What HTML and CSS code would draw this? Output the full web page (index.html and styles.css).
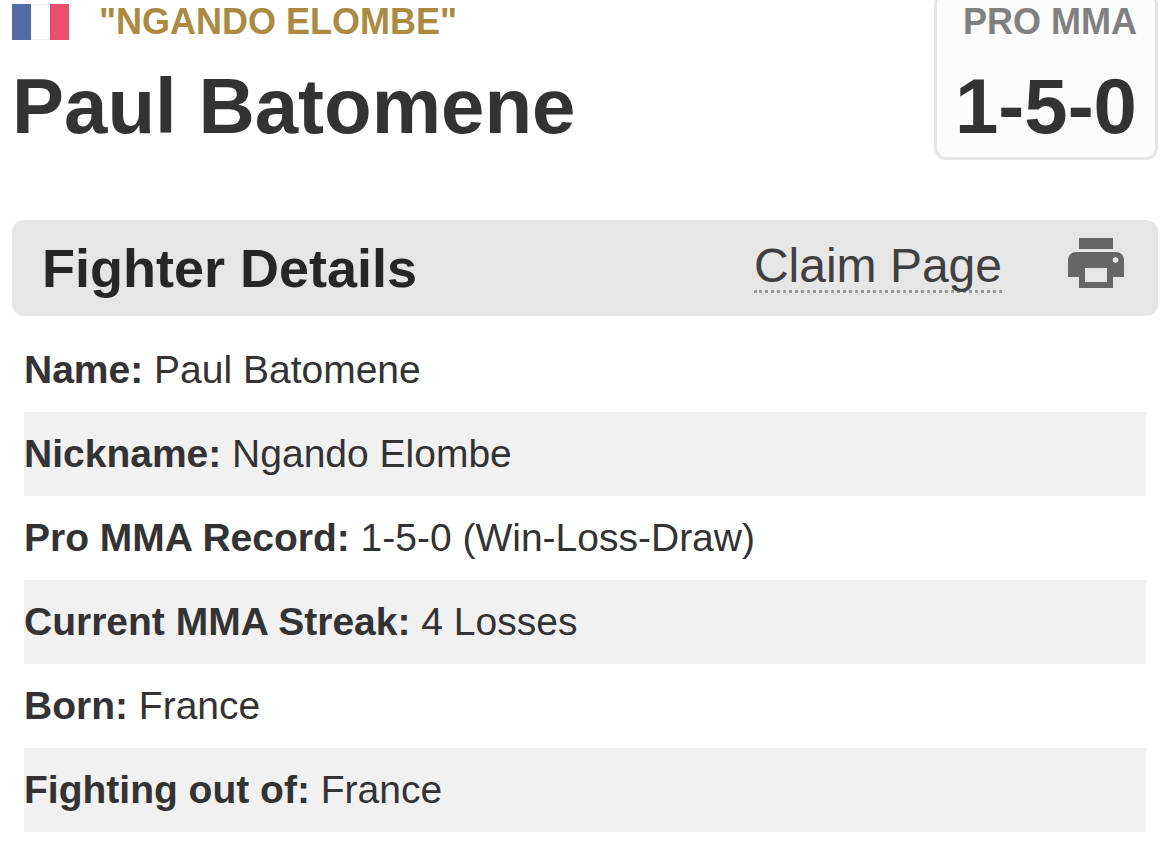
FILE: index.html
```
<!DOCTYPE html>
<html lang="en">

<head>
    <meta charset="UTF-8">
    <meta name="viewport" content="width=device-width, initial-scale=1.0">
    <title>Paul Batomene</title>
    <link rel="stylesheet" href="styles.css">
</head>

<body>
    <header class="fighter">
        <div class="title">
            <div class="nick">
                <svg class="flag" viewBox="0 0 57 36" role="img" aria-label="France">
                    <rect width="57" height="36" fill="#f0f0f0"/>
                    <rect x="19" y="1" width="19" height="34" fill="#fff"/>
                    <rect width="19" height="36" fill="#4f6da3"/>
                    <rect x="38" width="19" height="36" fill="#ea4f6b"/>
                </svg>
                <h4>"NGANDO ELOMBE"</h4>
            </div>
            <h1>Paul Batomene</h1>
        </div>
        <div class="record">
            <h5>PRO MMA</h5>
            <h3>1-5-0</h3>
        </div>
    </header>

    <section class="details">
        <div class="bar">
            <h2>Fighter Details</h2>
            <a class="claim" href="#">Claim Page</a>
            <button class="print" type="button" aria-label="Print">
                <svg viewBox="0 0 56 50">
                    <path fill="#666" fill-rule="evenodd" d="M11 0h34v11H11zM8 14h40a8 8 0 0 1 8 8v17H45v11H11V39H0V22a8 8 0 0 1 8-8zM17 30v14h22V30zM47.500 19.200a2.800 2.800 0 1 0 0 5.600a2.800 2.800 0 1 0 0-5.600z"/>
                </svg>
            </button>
        </div>
        <ul>
            <li><strong>Name:</strong> <span>Paul Batomene</span></li>
            <li><strong>Nickname:</strong> <span>Ngando Elombe</span></li>
            <li><strong>Pro MMA Record:</strong> <span>1-5-0 (Win-Loss-Draw)</span></li>
            <li><strong>Current MMA Streak:</strong> <span>4 Losses</span></li>
            <li><strong>Born:</strong> <span>France</span></li>
            <li><strong>Fighting out of:</strong> <span>France</span></li>
        </ul>
    </section>
</body>

</html>
```
FILE: styles.css
```
* {
    margin: 0;
    padding: 0;
    box-sizing: border-box;
}

body {
    padding: 0 12px;
    background: #fff;
    color: #333;
    font-family: "Liberation Sans", Arial, sans-serif;
}

.fighter {
    display: flex;
    justify-content: space-between;
    align-items: flex-start;
    margin-bottom: 60px;
}

.nick {
    display: flex;
    gap: 30px;
    padding-top: 4px;
}

.flag {
    width: 57px;
    height: 36px;
}

.nick h4 {
    color: #ab8a42;
    font-size: 36px;
    line-height: 36px;
}

h1 {
    padding-top: 22px;
    font-size: 78px;
    line-height: 88px;
}

/* the box runs off the top of the page */
.record {
    margin-top: -8px;
    padding: 9px 18px 7px;
    border: 3px solid #e5e5e5;
    border-radius: 12px;
    background: #fcfcfc;
    text-align: right;
}

.record h5 {
    color: #808080;
    font-size: 36px;
    line-height: 36px;
}

.record h3 {
    padding-top: 22px;
    font-size: 78px;
    line-height: 88px;
}

.bar {
    display: flex;
    align-items: center;
    height: 96px;
    padding: 0 34px 0 30px;
    border-radius: 12px;
    background: #e6e6e6;
}

.bar h2 {
    flex: 1;
    color: #262626;
    font-size: 54px;
    line-height: 96px;
}

.claim {
    margin-bottom: 2px;
    border-bottom: 3px dotted #999;
    color: #404040;
    font-size: 48px;
    line-height: 48px;
    text-decoration: none;
}

.print {
    margin-left: 66px;
    padding-bottom: 10px;
    border: none;
    background: none;
}

.print svg {
    display: block;
    width: 56px;
    height: 50px;
}

ul {
    padding: 12px 12px 10px;
    list-style: none;
}

li {
    font-size: 39px;
    line-height: 84px;
}

li:nth-child(even) {
    background: #f1f1f1;
}
```
